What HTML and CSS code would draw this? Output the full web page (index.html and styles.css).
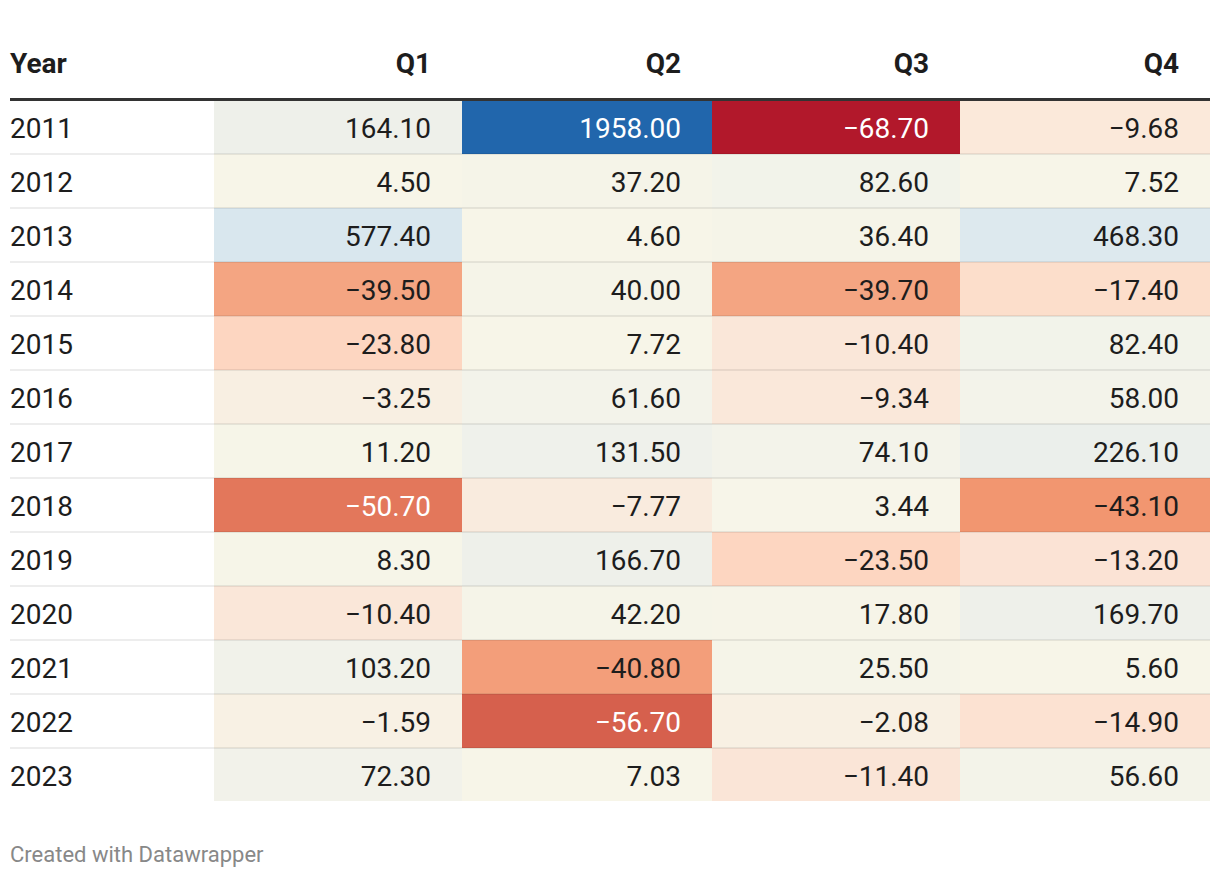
FILE: index.html
```html
<!DOCTYPE html>
<html>
<head>
<meta charset="utf-8">
<link rel="stylesheet" href="styles.css">
</head>
<body>
<div class="chart">
<table class="tbl">
<colgroup><col class="c-year"><col class="c-a"><col class="c-b"><col class="c-a"><col class="c-b"></colgroup>
<thead>
<tr><th class="year">Year</th><th>Q1</th><th>Q2</th><th>Q3</th><th>Q4</th></tr>
</thead>
<tbody>
<tr><td class="year">2011</td><td style="background:#eef0ea">164.10</td><td class="inv" style="background:#2166ac">1958.00</td><td class="inv" style="background:#b2182b">−68.70</td><td style="background:#fbe9da">−9.68</td></tr>
<tr><td class="year">2012</td><td style="background:#f7f5e8">4.50</td><td style="background:#f5f4e8">37.20</td><td style="background:#f2f3ea">82.60</td><td style="background:#f7f5e8">7.52</td></tr>
<tr><td class="year">2013</td><td style="background:#d9e7ee">577.40</td><td style="background:#f7f5e8">4.60</td><td style="background:#f5f4e8">36.40</td><td style="background:#dde9ee">468.30</td></tr>
<tr><td class="year">2014</td><td style="background:#f4a582">−39.50</td><td style="background:#f5f4e8">40.00</td><td style="background:#f4a582">−39.70</td><td style="background:#fcdecb">−17.40</td></tr>
<tr><td class="year">2015</td><td style="background:#fdd6c1">−23.80</td><td style="background:#f7f5e8">7.72</td><td style="background:#fae7d9">−10.40</td><td style="background:#f2f3ea">82.40</td></tr>
<tr><td class="year">2016</td><td style="background:#f8efe2">−3.25</td><td style="background:#f3f3ea">61.60</td><td style="background:#fae8da">−9.34</td><td style="background:#f3f3ea">58.00</td></tr>
<tr><td class="year">2017</td><td style="background:#f6f5e8">11.20</td><td style="background:#eff1eb">131.50</td><td style="background:#f3f3ea">74.10</td><td style="background:#ebefeb">226.10</td></tr>
<tr><td class="year">2018</td><td class="inv" style="background:#e3775b">−50.70</td><td style="background:#f9ebde">−7.77</td><td style="background:#f7f5e9">3.44</td><td style="background:#f29670">−43.10</td></tr>
<tr><td class="year">2019</td><td style="background:#f6f5e8">8.30</td><td style="background:#eef0ea">166.70</td><td style="background:#fdd6c1">−23.50</td><td style="background:#fbe3d5">−13.20</td></tr>
<tr><td class="year">2020</td><td style="background:#fae7d9">−10.40</td><td style="background:#f5f4e8">42.20</td><td style="background:#f6f4e8">17.80</td><td style="background:#eef0ea">169.70</td></tr>
<tr><td class="year">2021</td><td style="background:#f1f2ea">103.20</td><td style="background:#f39e7a">−40.80</td><td style="background:#f5f4e8">25.50</td><td style="background:#f7f5e8">5.60</td></tr>
<tr><td class="year">2022</td><td style="background:#f8f1e4">−1.59</td><td class="inv" style="background:#d6604d">−56.70</td><td style="background:#f8f0e3">−2.08</td><td style="background:#fce2d2">−14.90</td></tr>
<tr><td class="year">2023</td><td style="background:#f2f2ea">72.30</td><td style="background:#f7f5e8">7.03</td><td style="background:#fae5d7">−11.40</td><td style="background:#f3f3e9">56.60</td></tr>
</tbody>
</table>
<div class="footer">Created with Datawrapper</div>
</div>
</body>
</html>
```
FILE: styles.css
```css
html, body {
  margin: 0;
  padding: 0;
  background: #fff;
}
.chart {
  width: 1200px;
  padding: 30px 10px 0 10px;
  font-family: Roboto, "Liberation Sans", sans-serif;
  color: #1d1d1d;
}
.tbl {
  width: 1200px;
  border-collapse: collapse;
  table-layout: fixed;
  font-size: 28px;
  line-height: 34px;
}
.c-year { width: 204px; }
.c-a { width: 248px; }
.c-b { width: 250px; }
.tbl th {
  font-weight: 700;
  text-align: right;
  padding: 17px 31px 17px 0;
  border-bottom: 3px solid #333;
}
.tbl th.year {
  text-align: left;
  padding-right: 0;
}
.tbl td {
  text-align: right;
  padding: 11px 31px 7px 0;
  border-bottom: 2px solid rgba(0, 0, 0, 0.07);
  font-variant-numeric: tabular-nums;
}
.tbl tr:last-child td {
  border-bottom: none;
}
.tbl td.year {
  text-align: left;
  padding-right: 0;
}
.tbl td.inv {
  color: #fff;
}
.footer {
  margin-top: 41px;
  font-size: 22px;
  color: #888;
}
```
